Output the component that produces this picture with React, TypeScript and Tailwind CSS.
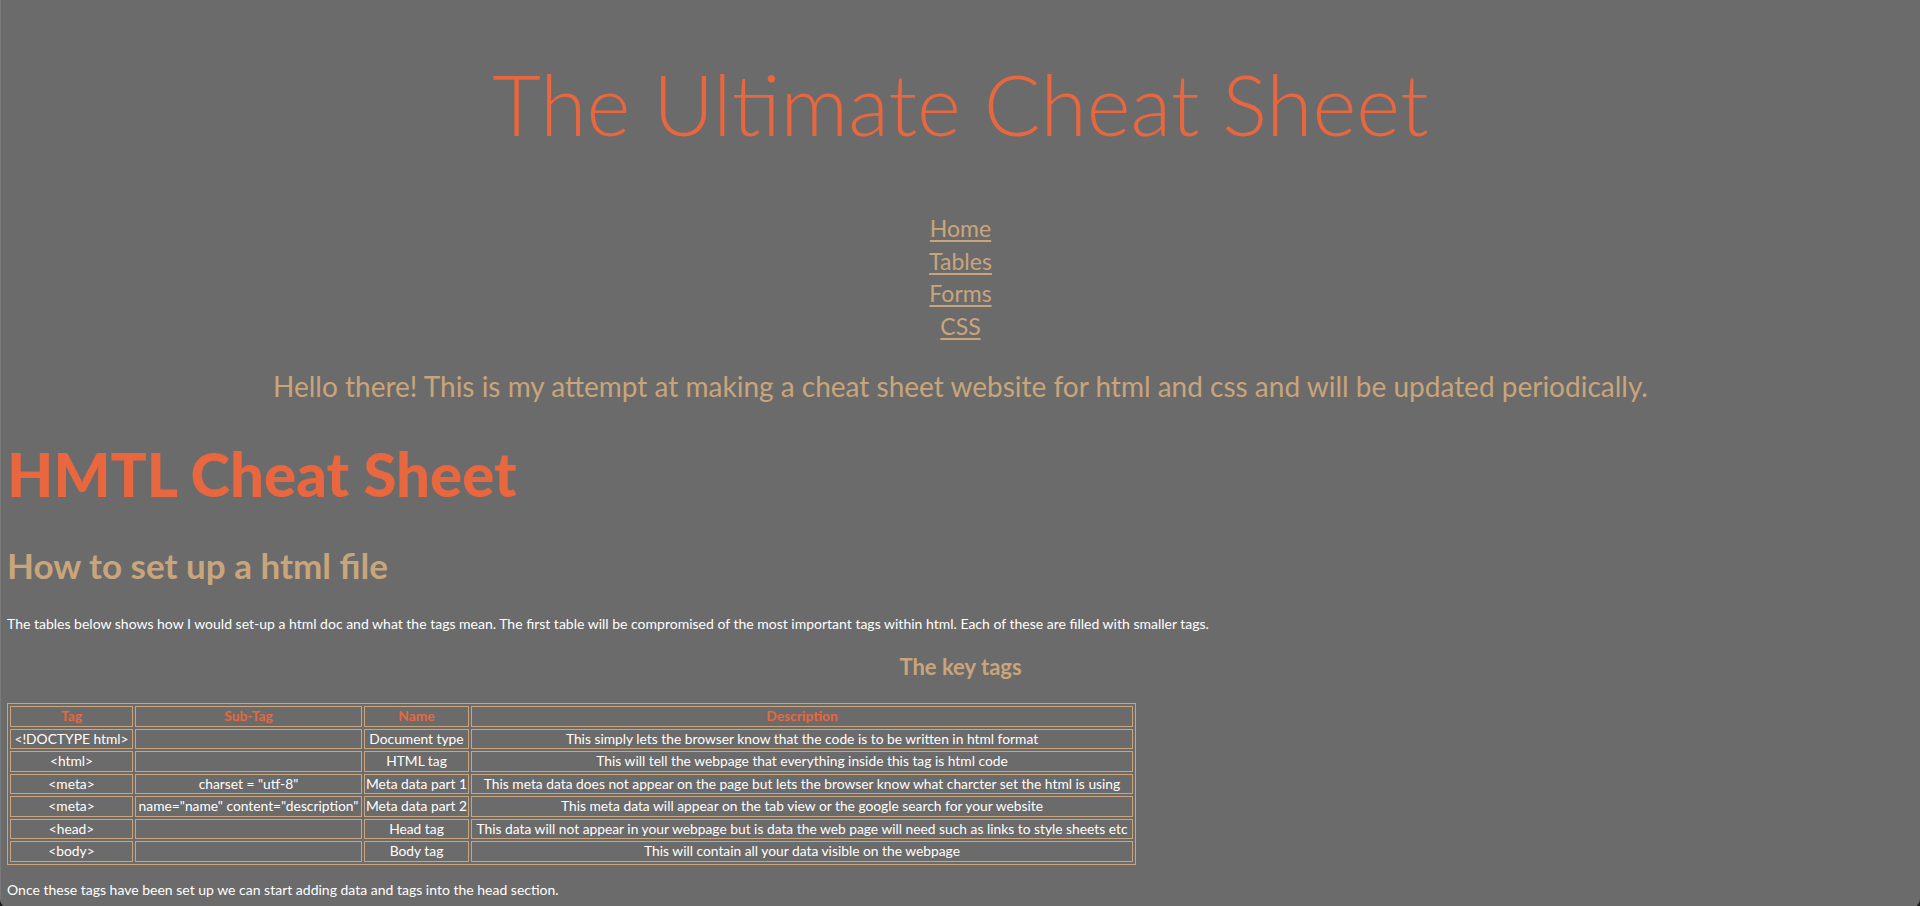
const navLinks = ["Home", "Tables", "Forms", "CSS"]

const keyTags = [
    { tag: "<!DOCTYPE html>", sub: "", name: "Document type", desc: "This simply lets the browser know that the code is to be written in html format" },
    { tag: "<html>", sub: "", name: "HTML tag", desc: "This will tell the webpage that everything inside this tag is html code" },
    { tag: "<meta>", sub: 'charset = "utf-8"', name: "Meta data part 1", desc: "This meta data does not appear on the page but lets the browser know what charcter set the html is using" },
    { tag: "<meta>", sub: 'name="name" content="description"', name: "Meta data part 2", desc: "This meta data will appear on the tab view or the google search for your website" },
    { tag: "<head>", sub: "", name: "Head tag", desc: "This data will not appear in your webpage but is data the web page will need such as links to style sheets etc" },
    { tag: "<body>", sub: "", name: "Body tag", desc: "This will contain all your data visible on the webpage" },
]

const cell = "border border-[#c9a57b] px-0 text-center whitespace-nowrap h-[20.5px] leading-[18px]"

export default function App() {
    return (
        <div className="min-h-screen bg-[#1a1a1a]">
            <div className="min-h-screen rounded-b-[9px] border-l border-[#7a7a7a] bg-[#6b6b6b] px-[6px] pt-[54px] pb-[8px] font-['Lato','Open_Sans',sans-serif] text-white">
                {/* heading */}
                <h1 className="text-center text-[84px] font-light leading-[100px] text-[#e8673e]">The Ultimate Cheat Sheet</h1>

                <nav className="mt-[58px] flex flex-col items-center">
                    {navLinks.map((l) => (
                        <a key={l} href="#" className="text-[23px] leading-[32.5px] text-[#c9a57b] underline underline-offset-[3px] decoration-[1.5px]">
                            {l}
                        </a>
                    ))}
                </nav>

                <p className="mt-[28px] text-center text-[28px] leading-[32px] text-[#c9a57b]">
                    Hello there! This is my attempt at making a cheat sheet website for html and css and will be updated periodically.
                </p>

                <h2 className="mt-[40px] font-['Lato_Black','Lato',sans-serif] text-[60px] font-black leading-[64px] text-[#e8673e]">HMTL Cheat Sheet</h2>

                <h3 className="mt-[39px] text-[35px] font-bold leading-[40px] text-[#c9a57b]">How to set up a html file</h3>

                <p className="mt-[29px] text-[14px] leading-[20px]">
                    The tables below shows how I would set-up a html doc and what the tags mean. The first table will be compromised of the most important tags within html. Each of these are filled with smaller tags.
                </p>

                <h4 className="mt-[20px] text-center text-[22px] font-bold leading-[26px] text-[#c9a57b]">The key tags</h4>

                <table className="mt-[23px] w-[1129px] table-fixed border-separate border-spacing-[2px] border border-[#c9a57b] text-[13.8px]">
                    <thead>
                        <tr className="font-bold text-[#e8673e]">
                            <th className={`${cell} w-[123px]`}>Tag</th>
                            <th className={`${cell} w-[227px]`}>Sub-Tag</th>
                            <th className={`${cell} w-[105px]`}>Name</th>
                            <th className={`${cell} w-[662px]`}>Description</th>
                        </tr>
                    </thead>
                    <tbody>
                        {keyTags.map((r, i) => (
                            <tr key={i}>
                                <td className={cell}>{r.tag}</td>
                                <td className={cell}>{r.sub}</td>
                                <td className={cell}>{r.name}</td>
                                <td className={cell}>{r.desc}</td>
                            </tr>
                        ))}
                    </tbody>
                </table>

                <p className="mt-[15px] text-[14px] leading-[20px]">Once these tags have been set up we can start adding data and tags into the head section.</p>
            </div>
        </div>
    )
}
